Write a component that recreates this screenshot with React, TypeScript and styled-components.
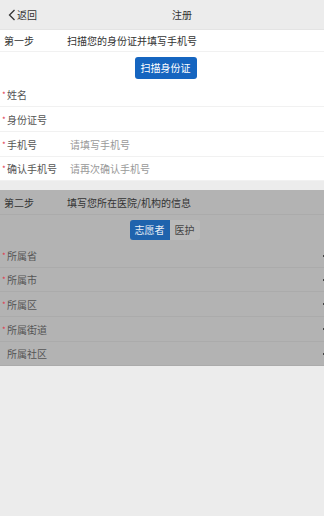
import React from "react";
import styled, { createGlobalStyle } from "styled-components";

const Global = createGlobalStyle`
  html, body { margin: 0; padding: 0; background: #ececec; }
  body { font-family: "Noto Sans CJK SC", "Noto Sans", sans-serif; font-size: 10px; color: #333; }
  * { box-sizing: border-box; }
`;

const Page = styled.div`
  width: 324px;
  height: 516px;
  background: #ececec;
  overflow: hidden;
  display: flex;
  flex-direction: column;
`;

const Header = styled.div`
  height: 30px;
  display: flex;
  align-items: center;
  background: #ececec;
  border-bottom: 1px solid #e4e4e4;
  padding-left: 8px;
`;

const Back = styled.div`
  display: flex;
  align-items: center;
  gap: 1px;
  width: 150px;
  font-size: 10px;
  color: #333;
`;

const Title = styled.div`
  font-size: 10px;
  color: #333;
  margin-left: 14px;
`;

const Section = styled.div<{ $dim?: boolean }>`
  background: ${(p) => (p.$dim ? "#b3b3b3" : "#ffffff")};
  display: flex;
  flex-direction: column;
`;

const Gap = styled.div`
  height: 9px;
  background: #ececec;
`;

const StepRow = styled.div<{ $dim?: boolean; $h: number }>`
  height: ${(p) => p.$h}px;
  display: flex;
  align-items: center;
  padding-left: 4px;
  border-bottom: 1px solid ${(p) => (p.$dim ? "#ababab" : "#f1f1f1")};
`;

const StepLabel = styled.div`
  width: 63px;
`;

const Center = styled.div<{ $h: number; $shift: number }>`
  height: ${(p) => p.$h}px;
  display: flex;
  align-items: center;
  justify-content: center;
  padding-left: ${(p) => p.$shift}px;
`;

const BlueButton = styled.div`
  height: 22px;
  padding: 0 6px;
  display: flex;
  align-items: center;
  background: #1565c0;
  color: #fff;
  border-radius: 3px;
  font-size: 10px;
`;

const Toggle = styled.div`
  display: flex;
`;

const ToggleItem = styled.div<{ $active?: boolean }>`
  height: 20px;
  padding: 0 5px;
  display: flex;
  align-items: center;
  font-size: 10px;
  background: ${(p) => (p.$active ? "#1f63ad" : "#bababa")};
  color: ${(p) => (p.$active ? "#e8eef6" : "#444")};
  border-radius: ${(p) => (p.$active ? "3px 0 0 3px" : "0 3px 3px 0")};
`;

const Row = styled.div<{ $dim?: boolean; $h: number }>`
  height: ${(p) => p.$h}px;
  display: flex;
  align-items: center;
  padding-left: 2px;
  border-bottom: 1px solid ${(p) => (p.$dim ? "#ababab" : "#f1f1f1")};
  color: #555;
`;

const Star = styled.span<{ $hidden?: boolean }>`
  color: #e0354a;
  font-size: 8px;
  width: 5px;
  visibility: ${(p) => (p.$hidden ? "hidden" : "visible")};
`;

const Label = styled.div`
  width: 63px;
`;

const Placeholder = styled.div`
  color: #999;
`;

const Fill = styled.div`
  flex: 1;
`;

const Arrow = styled.svg`
  margin-right: -3px;
  flex: none;
`;

const Chevron = () => (
  <svg width="8" height="12" viewBox="0 0 8 12">
    <path d="M6.5 1 L1.5 6 L6.5 11" fill="none" stroke="#333" strokeWidth="1.3" />
  </svg>
);

const Caret = () => (
  <Arrow width="5" height="6" viewBox="0 0 5 6">
    <path d="M4 1 L1 3 L4 5" fill="none" stroke="#333" strokeWidth="1" />
  </Arrow>
);

const firstRows: { label: string; ph?: string; h: number }[] = [
  { label: "姓名", h: 24 },
  { label: "身份证号", h: 25 },
  { label: "手机号", ph: "请填写手机号", h: 25 },
  { label: "确认手机号", ph: "请再次确认手机号", h: 24 },
];

const secondRows: { label: string; req: boolean; h: number }[] = [
  { label: "所属省", req: true, h: 24 },
  { label: "所属市", req: true, h: 24 },
  { label: "所属区", req: true, h: 25 },
  { label: "所属街道", req: true, h: 25 },
  { label: "所属社区", req: false, h: 24 },
];

export default function App() {
  return (
    <Page>
      <Global />
      <Header>
        <Back>
          <Chevron />
          <span>返回</span>
        </Back>
        <Title>注册</Title>
      </Header>
      <Section>
        <StepRow $h={22}>
          <StepLabel>第一步</StepLabel>
          <div>扫描您的身份证并填写手机号</div>
        </StepRow>
        <Center $h={31} $shift={7}>
          <BlueButton>扫描身份证</BlueButton>
        </Center>
        {firstRows.map((r) => (
          <Row key={r.label} $h={r.h}>
            <Star>*</Star>
            <Label>{r.label}</Label>
            {r.ph && <Placeholder>{r.ph}</Placeholder>}
          </Row>
        ))}
      </Section>
      <Gap />
      <Section $dim>
        <StepRow $dim $h={25}>
          <StepLabel>第二步</StepLabel>
          <div>填写您所在医院/机构的信息</div>
        </StepRow>
        <Center $h={29} $shift={5}>
          <Toggle>
            <ToggleItem $active>志愿者</ToggleItem>
            <ToggleItem>医护</ToggleItem>
          </Toggle>
        </Center>
        {secondRows.map((r) => (
          <Row key={r.label} $dim $h={r.h}>
            <Star $hidden={!r.req}>*</Star>
            <Label>{r.label}</Label>
            <Fill />
            <Caret />
          </Row>
        ))}
      </Section>
    </Page>
  );
}
